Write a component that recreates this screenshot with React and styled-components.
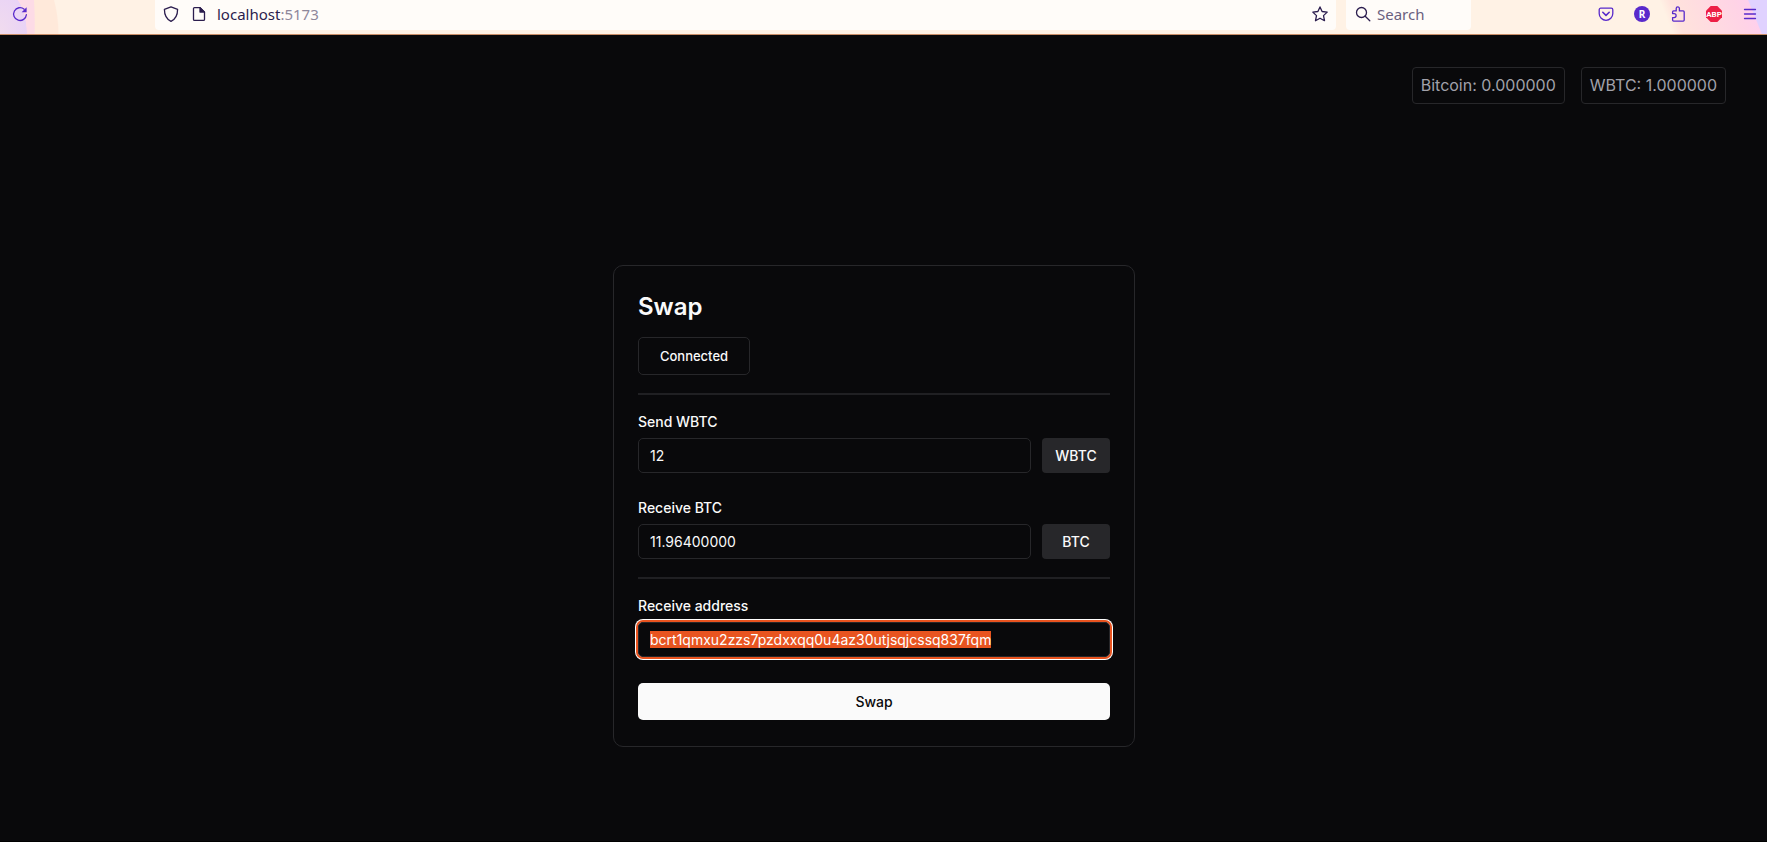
import React, { useEffect, useRef } from "react";
import styled, { createGlobalStyle } from "styled-components";

const GlobalStyle = createGlobalStyle`
  * { box-sizing: border-box; }
  body {
    margin: 0;
    background: #09090b;
    color: #fafafa;
    font-family: Inter, "Liberation Sans", sans-serif;
  }
  button, input { font-family: inherit; }
`;

const Window = styled.div`
  min-height: 100vh;
  display: flex;
  flex-direction: column;
  border-bottom: 1px solid #000;
`;

const Toolbar = styled.header`
  display: flex;
  align-items: flex-start;
  height: 35px;
  border-bottom: 1px solid #c98e68;
  background:
    radial-gradient(ellipse 27px 46px at 0 34px, #f1dcee 0, #e9d3f6 98%, transparent 100%),
    radial-gradient(ellipse 35px 140px at 0 24px, #fddbe6 98%, transparent 100%),
    radial-gradient(ellipse 59px 90px at 0 34px, #ffe9da 98%, transparent 100%),
    linear-gradient(68deg, transparent calc(100% - 100px), #ffe3dc calc(100% - 90px), #ffd3e6 calc(100% - 30px), #ffd0ec calc(100% - 18px), #e0d2ff calc(100% - 17px)),
    #fff2e5;
  font-family: "Noto Sans", "Open Sans", sans-serif;
  font-size: 15px;
`;

const IconButton = styled.button`
  display: flex;
  align-items: center;
  justify-content: center;
  width: 16px;
  height: 28px;
  padding: 0;
  border: 0;
  background: none;
  color: ${(p) => p.$color || "#592acb"};
`;

const ReloadSlot = styled.div`
  width: 155px;
  padding-left: 12px;
`;

const AddressBar = styled.div`
  flex: 1;
  display: flex;
  align-items: center;
  gap: 10px;
  height: 30px;
  padding: 0 8px 2px;
  border-radius: 0 0 4px 4px;
  background: #fffcf9;
  color: #2b1d4e;
`;

const SiteInfo = styled.div`
  display: flex;
  gap: 12px;
`;

const Address = styled.div`
  flex: 1;
  span { color: #8f879b; }
`;

const SearchBox = styled.label`
  display: flex;
  align-items: center;
  gap: 6px;
  width: 125px;
  height: 30px;
  margin-left: 10px;
  padding: 0 9px 2px;
  border-radius: 0 0 4px 4px;
  background: #fffcf9;
  color: #2b1d4e;
`;

const SearchInput = styled.input`
  flex: 1;
  min-width: 0;
  padding: 0;
  border: 0;
  background: none;
  font-size: 15px;
  &::placeholder { color: #6a607f; opacity: 1; }
`;

const Extensions = styled.div`
  display: flex;
  gap: 20px;
  margin-left: 127px;
  padding-right: 9px;
`;

const Badge = styled.span`
  width: 16px;
  height: 16px;
  border-radius: 50%;
  background: #592acb;
  color: #fff;
  font-size: 10px;
  font-weight: 700;
  line-height: 16px;
  text-align: center;
`;

const Page = styled.main`
  flex: 1;
  display: flex;
  flex-direction: column;
  align-items: center;
  padding: 32px 19px 32px 0;
`;

const Balances = styled.div`
  align-self: flex-end;
  display: flex;
  gap: 16px;
  margin-right: 22px;
`;

const Balance = styled.div`
  padding: 8px;
  border: 1px solid #27272a;
  border-radius: 4px;
  color: #a1a1aa;
  font-size: 16px;
  line-height: 19px;
`;

const Card = styled.form`
  display: flex;
  flex-direction: column;
  width: 522px;
  max-width: 100%;
  margin-top: 161px;
  padding: 26px 24px;
  border: 1px solid #27272a;
  border-radius: 10px;
`;

const Title = styled.h1`
  margin: 0;
  font-size: 24px;
  font-weight: 600;
  line-height: 30px;
`;

const StatusButton = styled.button`
  align-self: flex-start;
  width: 112px;
  height: 38px;
  margin-top: 15px;
  padding: 0;
  border: 1px solid #27272a;
  border-radius: 5px;
  background: none;
  color: #fafafa;
  font-size: 13px;
  font-weight: 500;
`;

const Divider = styled.hr`
  width: 100%;
  height: 2px;
  margin: 18px 0;
  border: 0;
  background: #202023;
`;

const Field = styled.div`
  display: flex;
  flex-direction: column;
  gap: 7px;
  & + & { margin-top: 26px; }
`;

const Label = styled.label`
  font-size: 14px;
  font-weight: 500;
  line-height: 18px;
`;

const Row = styled.div`
  display: flex;
  gap: 11px;
`;

const TextInput = styled.input`
  flex: 1;
  min-width: 0;
  height: 35px;
  padding: 0 11px;
  border: 1px solid #27272a;
  border-radius: 5px;
  outline: none;
  background: none;
  color: #fafafa;
  font-size: 14px;
  line-height: 17px;
  &:focus { box-shadow: 0 0 0 2px #e95420, 0 0 0 3px #fff; }
  &::selection { background: rgba(233, 84, 32, 0.996); color: #fff; }
`;

const TokenButton = styled.button`
  width: 68px;
  height: 35px;
  padding: 0;
  border: 0;
  border-radius: 4px;
  background: #27272a;
  color: #fafafa;
  font-size: 14px;
  font-weight: 500;
`;

const SubmitButton = styled.button`
  height: 37px;
  margin-top: 26px;
  border: 0;
  border-radius: 5px;
  background: #fafafa;
  color: #09090b;
  font-size: 14px;
  font-weight: 500;
`;

function Icon({ children }) {
  return (
    <svg width="16" height="16" viewBox="0 0 16 16" fill="none" stroke="currentColor" strokeWidth="1.3" strokeLinecap="round" strokeLinejoin="round" aria-hidden="true">
      {children}
    </svg>
  );
}

function BrowserBar() {
  return (
    <Toolbar>
      <ReloadSlot>
        <IconButton aria-label="Reload">
          <Icon>
            <path d="M12.2 3.2A6.4 6.4 0 1 0 14.4 8.6" />
            <path d="M14.6 1.2v5h-5z" fill="currentColor" stroke="none" />
          </Icon>
        </IconButton>
      </ReloadSlot>
      <AddressBar>
        <SiteInfo>
          <Icon>
            <path d="M8 .8l6.6 2.5C14.6 9 13 13 8 15.4 3 13 1.4 9 1.4 3.3z" />
          </Icon>
          <Icon>
            <path d="M3.5 1.6h5.5l4.5 4.5v7.3a1 1 0 0 1-1 1h-9a1 1 0 0 1-1-1V2.6a1 1 0 0 1 1-1z" />
            <path d="M9 1.6v4.5h4.5z" fill="currentColor" />
          </Icon>
        </SiteInfo>
        <Address>localhost<span>:5173</span></Address>
        <IconButton $color="#2b1d4e" aria-label="Bookmark">
          <Icon>
            <path d="M8 .9l2.1 4.6 5.1.6-3.7 3.5 1 5.1L8 12.2l-4.5 2.5 1-5.1L.8 6.1l5.1-.6z" />
          </Icon>
        </IconButton>
      </AddressBar>
      <SearchBox>
        <Icon>
          <circle cx="6.5" cy="6.5" r="5" />
          <path d="M10.2 10.2l4.6 4.6" />
        </Icon>
        <SearchInput placeholder="Search" aria-label="Search" />
      </SearchBox>
      <Extensions>
        <IconButton aria-label="Pocket">
          <Icon>
            <path d="M2.7 2.2h10.6a1.5 1.5 0 0 1 1.5 1.5V7.5a6.8 6.8 0 0 1-13.6 0V3.7a1.5 1.5 0 0 1 1.5-1.5z" />
            <path d="M4.8 6.3L8 9.4l3.2-3.1" strokeWidth="1.6" />
          </Icon>
        </IconButton>
        <IconButton aria-label="Profile">
          <Badge>R</Badge>
        </IconButton>
        <IconButton aria-label="Extensions">
          <Icon>
            <path d="M2.6 7.6V5.9a1 1 0 0 1 1-1h2.6V2.5a1.6 1.6 0 0 1 3.2 0v2.4h3.8a1 1 0 0 1 1 1v8.2a1 1 0 0 1-1 1H3.6a1 1 0 0 1-1-1v-2.5h1.5a2 2 0 0 0 0-4z" />
          </Icon>
        </IconButton>
        <IconButton aria-label="AdBlock Plus">
          <svg width="16" height="16" viewBox="0 0 16 16" aria-hidden="true">
            <path d="M4.7 0h6.6L16 4.7v6.6L11.3 16H4.7L0 11.3V4.7z" fill="#ed1e45" />
            <text x="8" y="11" textAnchor="middle" fill="#fff" fontFamily="Roboto, sans-serif" fontWeight="700" fontSize="8">ABP</text>
          </svg>
        </IconButton>
        <IconButton aria-label="Menu">
          <Icon><path d="M2.5 3.5h11M2.5 8h11M2.5 12.5h11" /></Icon>
        </IconButton>
      </Extensions>
    </Toolbar>
  );
}

export default function App() {
  const address = useRef(null);
  useEffect(() => {
    address.current.focus();
    address.current.select();
  }, []);
  return (
    <Window>
      <GlobalStyle />
      <BrowserBar />
      <Page>
        <Balances>
          <Balance>Bitcoin: 0.000000</Balance>
          <Balance>WBTC: 1.000000</Balance>
        </Balances>
        <Card onSubmit={(e) => e.preventDefault()}>
          <Title>Swap</Title>
          <StatusButton type="button">Connected</StatusButton>
          <Divider />
          <Field>
            <Label htmlFor="send">Send WBTC</Label>
            <Row>
              <TextInput id="send" defaultValue="12" />
              <TokenButton type="button">WBTC</TokenButton>
            </Row>
          </Field>
          <Field>
            <Label htmlFor="receive">Receive BTC</Label>
            <Row>
              <TextInput id="receive" defaultValue="11.96400000" />
              <TokenButton type="button">BTC</TokenButton>
            </Row>
          </Field>
          <Divider />
          <Field>
            <Label htmlFor="address">Receive address</Label>
            <Row>
              <TextInput id="address" ref={address} spellCheck={false} defaultValue="bcrt1qmxu2zzs7pzdxxqq0u4az30utjsqjcssq837fqm" />
            </Row>
          </Field>
          <SubmitButton type="submit">Swap</SubmitButton>
        </Card>
      </Page>
    </Window>
  );
}
